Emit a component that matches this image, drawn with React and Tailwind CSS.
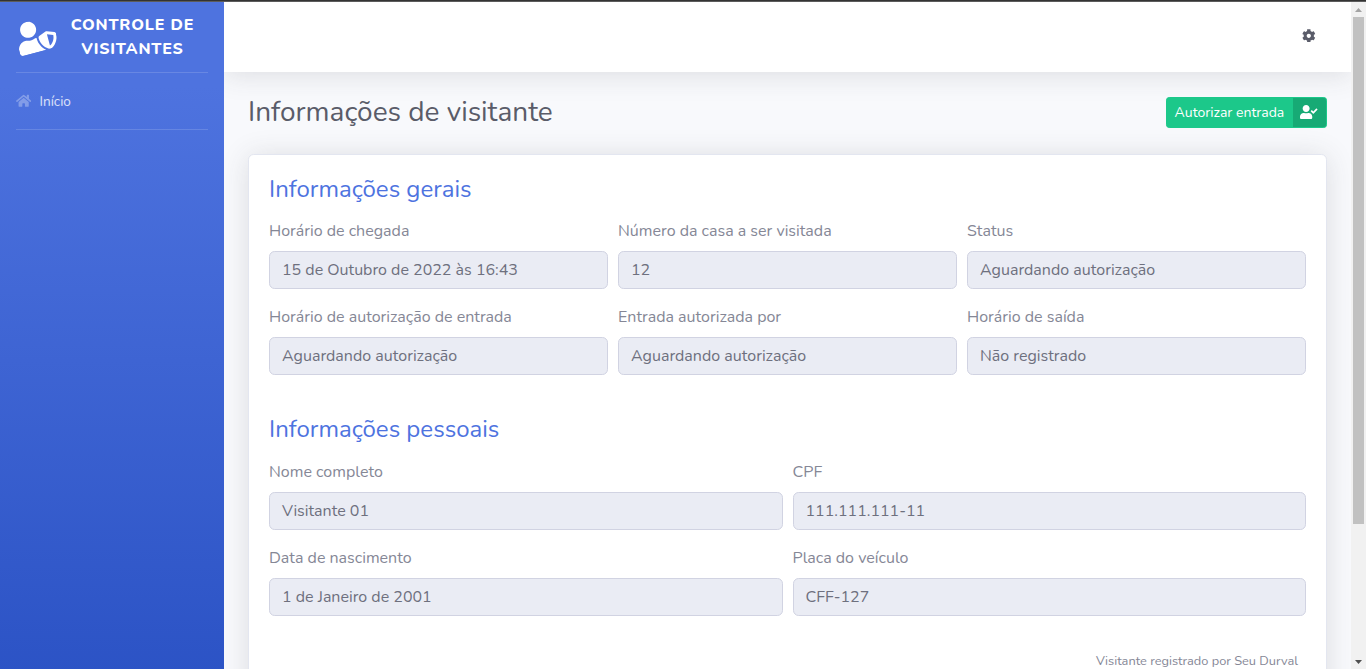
import React from "react";
import { FaUserShield, FaHome, FaCog, FaUserCheck } from "react-icons/fa";

function Field({ label, value }) {
  return (
    <div className="mb-4 min-w-0 flex-1">
      <div className="mb-2 h-6 whitespace-nowrap leading-6">{label}</div>
      <div className="flex h-[38px] items-center rounded-[5.6px] border border-[#d1d3e2] bg-[#eaecf4] px-3 text-[#6e707e]">
        <span className="whitespace-nowrap leading-6">{value}</span>
      </div>
    </div>
  );
}

function Row({ children }) {
  return <div className="flex gap-2.5">{children}</div>;
}

function Sidebar() {
  return (
    <aside className="flex h-[838px] w-56 shrink-0 flex-col bg-[linear-gradient(180deg,#4e73df_10%,#224abe_100%)] px-4 text-white">
      <div className="flex h-[70px] items-center">
        <FaUserShield className="mb-0.5 h-8 w-10 shrink-0 -rotate-15" />
        <div className="ml-[14.7px] whitespace-nowrap text-center text-base font-extrabold leading-6 tracking-[0.8px]">
          <div>CONTROLE DE</div>
          <div>VISITANTES</div>
        </div>
      </div>
      <div className="h-px bg-white/15" />
      <a className="flex h-14 items-center text-white/80">
        <FaHome className="mr-[8.2px] h-[13.6px] w-[15.3px] text-white/30" />
        <span className="pt-0.5 text-[13.6px]">Início</span>
      </a>
      <div className="h-px bg-white/15" />
    </aside>
  );
}

function Scrollbar() {
  return (
    <div className="flex h-[667px] w-[15px] shrink-0 flex-col items-center bg-[#f1f1f1]">
      <svg className="h-[15px] w-[15px] shrink-0" viewBox="0 0 15 15">
        <path d="M4 10h7L7.5 6z" fill="#a3a3a3" />
      </svg>
      <div className="h-[507px] w-[11px] bg-[#c1c1c1]" />
      <div className="flex-1" />
      <svg className="h-[15px] w-[15px] shrink-0" viewBox="0 0 15 15">
        <path d="M4 6h7L7.5 10z" fill="#505050" />
      </svg>
    </div>
  );
}

export default function App() {
  return (
    <div className="h-[669px] w-[1366px] overflow-hidden bg-[#f8f9fc] font-[Nunito,Lato,sans-serif] text-base text-[#858796]">
      <div className="h-0.5 border-b border-[#5c5c5c] bg-[#333333]" />
      <div className="flex h-[667px] overflow-hidden">
        <Sidebar />
        <div className="h-[838px] min-w-0 flex-1 overflow-hidden">
          <header className="flex h-[70px] items-center justify-end bg-white pr-[35px] shadow-[0_2.4px_28px_0_rgba(58,59,69,0.15)]">
            <FaCog className="mb-[3px] h-[13.6px] w-[13.6px] text-[#5a5c69]" />
          </header>
          <main className="px-6 pt-6">
            <div className="mb-[26px] flex h-8 items-center justify-between">
              <h1 className="whitespace-nowrap text-[28px] leading-[34px] text-[#5a5c69]">
                Informações de visitante
              </h1>
              <button className="flex h-[31px] w-[161px] items-stretch overflow-hidden rounded-[3.2px] border border-[#1cc88a] bg-[#1cc88a] text-sm text-white">
                <span className="flex flex-1 items-center whitespace-nowrap pl-[7.6px] pt-px">Autorizar entrada</span>
                <span className="flex w-[33.5px] items-center bg-black/15 pl-[7.5px]">
                  <FaUserCheck className="h-3.5 w-[17.5px]" />
                </span>
              </button>
            </div>
            <section className="h-[560px] rounded-[5.6px] border border-[#e3e6f0] bg-white px-5 pt-5 shadow-[0_2.4px_28px_0_rgba(58,59,69,0.15)]">
              <h2 className="mb-[15px] h-[29px] whitespace-nowrap text-2xl leading-[29px] text-[#4e73df]">
                Informações gerais
              </h2>
              <Row>
                <Field label="Horário de chegada" value="15 de Outubro de 2022 às 16:43" />
                <Field label="Número da casa a ser visitada" value="12" />
                <Field label="Status" value="Aguardando autorização" />
              </Row>
              <Row>
                <Field label="Horário de autorização de entrada" value="Aguardando autorização" />
                <Field label="Entrada autorizada por" value="Aguardando autorização" />
                <Field label="Horário de saída" value="Não registrado" />
              </Row>
              <h2 className="mb-4 mt-6 h-[29px] whitespace-nowrap text-2xl leading-[29px] text-[#4e73df]">
                Informações pessoais
              </h2>
              <Row>
                <Field label="Nome completo" value="Visitante 01" />
                <Field label="CPF" value="111.111.111-11" />
              </Row>
              <Row>
                <Field label="Data de nascimento" value="1 de Janeiro de 2001" />
                <Field label="Placa do veículo" value="CFF-127" />
              </Row>
              <div className="mt-5 pr-2 text-right text-[12.8px] leading-[19px]">
                Visitante registrado por Seu Durval
              </div>
            </section>
          </main>
        </div>
        <Scrollbar />
      </div>
    </div>
  );
}
